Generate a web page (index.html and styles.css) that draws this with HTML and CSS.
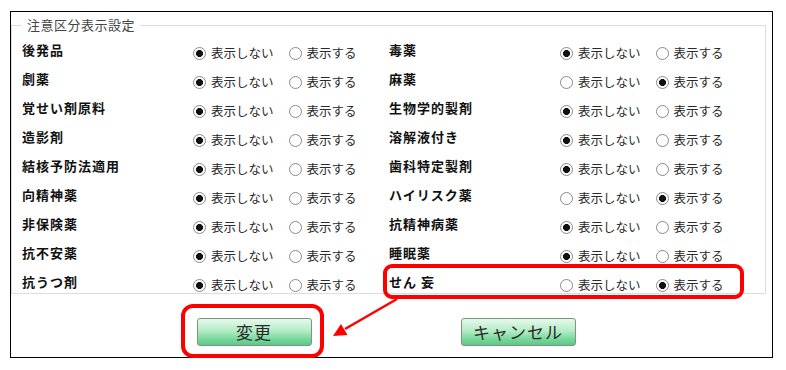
FILE: index.html
```html
<!DOCTYPE html>
<html lang="ja">
<head>
  <meta charset="UTF-8">
  <title>注意区分表示設定</title>
  <link rel="stylesheet" href="styles.css">
</head>
<body>
  <div class="panel">
    <fieldset class="settings">
      <legend>注意区分表示設定</legend>
      <div class="grid">
        <div class="item"><span class="name">後発品</span><span class="choices"><label><input type="radio" name="k1" checked>表示しない</label><label><input type="radio" name="k1">表示する</label></span></div>
        <div class="item"><span class="name">毒薬</span><span class="choices"><label><input type="radio" name="k2" checked>表示しない</label><label><input type="radio" name="k2">表示する</label></span></div>

        <div class="item"><span class="name">劇薬</span><span class="choices"><label><input type="radio" name="k3" checked>表示しない</label><label><input type="radio" name="k3">表示する</label></span></div>
        <div class="item"><span class="name">麻薬</span><span class="choices"><label><input type="radio" name="k4">表示しない</label><label><input type="radio" name="k4" checked>表示する</label></span></div>

        <div class="item"><span class="name">覚せい剤原料</span><span class="choices"><label><input type="radio" name="k5" checked>表示しない</label><label><input type="radio" name="k5">表示する</label></span></div>
        <div class="item"><span class="name">生物学的製剤</span><span class="choices"><label><input type="radio" name="k6" checked>表示しない</label><label><input type="radio" name="k6">表示する</label></span></div>

        <div class="item"><span class="name">造影剤</span><span class="choices"><label><input type="radio" name="k7" checked>表示しない</label><label><input type="radio" name="k7">表示する</label></span></div>
        <div class="item"><span class="name">溶解液付き</span><span class="choices"><label><input type="radio" name="k8" checked>表示しない</label><label><input type="radio" name="k8">表示する</label></span></div>

        <div class="item"><span class="name">結核予防法適用</span><span class="choices"><label><input type="radio" name="k9" checked>表示しない</label><label><input type="radio" name="k9">表示する</label></span></div>
        <div class="item"><span class="name">歯科特定製剤</span><span class="choices"><label><input type="radio" name="k10" checked>表示しない</label><label><input type="radio" name="k10">表示する</label></span></div>

        <div class="item"><span class="name">向精神薬</span><span class="choices"><label><input type="radio" name="k11" checked>表示しない</label><label><input type="radio" name="k11">表示する</label></span></div>
        <div class="item"><span class="name">ハイリスク薬</span><span class="choices"><label><input type="radio" name="k12">表示しない</label><label><input type="radio" name="k12" checked>表示する</label></span></div>

        <div class="item"><span class="name">非保険薬</span><span class="choices"><label><input type="radio" name="k13" checked>表示しない</label><label><input type="radio" name="k13">表示する</label></span></div>
        <div class="item"><span class="name">抗精神病薬</span><span class="choices"><label><input type="radio" name="k14" checked>表示しない</label><label><input type="radio" name="k14">表示する</label></span></div>

        <div class="item"><span class="name">抗不安薬</span><span class="choices"><label><input type="radio" name="k15" checked>表示しない</label><label><input type="radio" name="k15">表示する</label></span></div>
        <div class="item"><span class="name">睡眠薬</span><span class="choices"><label><input type="radio" name="k16" checked>表示しない</label><label><input type="radio" name="k16">表示する</label></span></div>

        <div class="item"><span class="name">抗うつ剤</span><span class="choices"><label><input type="radio" name="k17" checked>表示しない</label><label><input type="radio" name="k17">表示する</label></span></div>
        <!-- 注目項目（赤枠） -->
        <div class="item marked"><span class="name">せん 妄</span><span class="choices"><label><input type="radio" name="k18">表示しない</label><label><input type="radio" name="k18" checked>表示する</label></span></div>
      </div>
    </fieldset>

    <div class="actions">
      <span class="btn-mark"><button class="btn">変更</button></span>
      <button class="btn">キャンセル</button>
    </div>
  </div>

  <!-- 矢印（注記） -->
  <svg class="arrow" width="786" height="370" viewBox="0 0 786 370">
    <line x1="397" y1="299" x2="345" y2="329" stroke="#f00" stroke-width="2.5"/>
    <polygon points="333,336 347.5,335.1 341,323.9" fill="#f00"/>
  </svg>
</body>
</html>
```

FILE: styles.css
```css
/* 基本 */
html, body {
  margin: 0;
  padding: 0;
  background: #ffffff;
  color: #111111;
  font-family: "Noto Sans CJK JP", "Noto Sans", sans-serif;
}
*, *::before, *::after {
  box-sizing: border-box;
}
body {
  position: relative;
  width: 786px;
  height: 370px;
  padding: 11px 13px 0 10px;
}

/* 外枠 */
.panel {
  width: 763px;
  border: 1px solid #000000;
  padding: 5px 6px 11px 0;
}

/* 注意区分フィールドセット */
.settings {
  margin: 0;
  border: 1px solid #dddddd;
  padding: 7px 0 0 10px;
}
.settings legend {
  padding: 0 5px;
  font-size: 13px;
  line-height: 16px;
  letter-spacing: 0.5px;
  color: #444444;
}
.grid {
  display: grid;
  grid-template-columns: 367px 1fr;
  grid-auto-rows: 21px;
  row-gap: 8px;
}
.item {
  display: flex;
  align-items: flex-start;
  position: relative;
}
.name {
  width: 171px;
  flex: none;
  font-size: 13px;
  font-weight: 700;
  line-height: 20px;
  letter-spacing: 1px;
  color: #111111;
}
.choices {
  display: flex;
  margin-top: 3px;
  font-size: 12.5px;
  line-height: 20px;
  color: #2a2a2a;
}
.choices label {
  display: flex;
  align-items: center;
}
.choices label:first-child {
  margin-right: 15px;
}
.choices input[type="radio"] {
  appearance: none;
  -webkit-appearance: none;
  width: 13px;
  height: 13px;
  margin: 0 5px 0 0;
  border: 1px solid #8a8a8a;
  border-radius: 50%;
  background: #ffffff;
}
.choices input[type="radio"]:checked {
  background: radial-gradient(circle, #111111 0, #111111 3.2px, #ffffff 3.8px);
}

/* 赤枠 */
.marked::after {
  content: "";
  position: absolute;
  left: -6px;
  top: -8px;
  width: 361px;
  height: 35px;
  border: 4px solid #ff0000;
  border-radius: 9px;
}

/* ボタン */
.actions {
  display: flex;
  justify-content: center;
  gap: 149px;
  margin-top: 24px;
  padding-right: 5px;
}
.btn-mark {
  position: relative;
  display: block;
}
.btn-mark::after {
  content: "";
  position: absolute;
  left: -16px;
  top: -14px;
  width: 143px;
  height: 54px;
  border: 4px solid #ff0000;
  border-radius: 12px;
}
.btn {
  display: block;
  width: 115px;
  height: 28px;
  padding: 0;
  border: 1px solid #7d9485;
  border-radius: 3px;
  background: linear-gradient(#e6f9ec, #b4ecc6 45%, #74d597 80%, #5cc985);
  font-family: "Noto Sans CJK JP", "Noto Sans", sans-serif;
  font-size: 17px;
  line-height: 26px;
  letter-spacing: 1px;
  color: #2a2a2a;
}

/* 矢印 */
.arrow {
  position: absolute;
  left: 0;
  top: 0;
  pointer-events: none;
}
```
